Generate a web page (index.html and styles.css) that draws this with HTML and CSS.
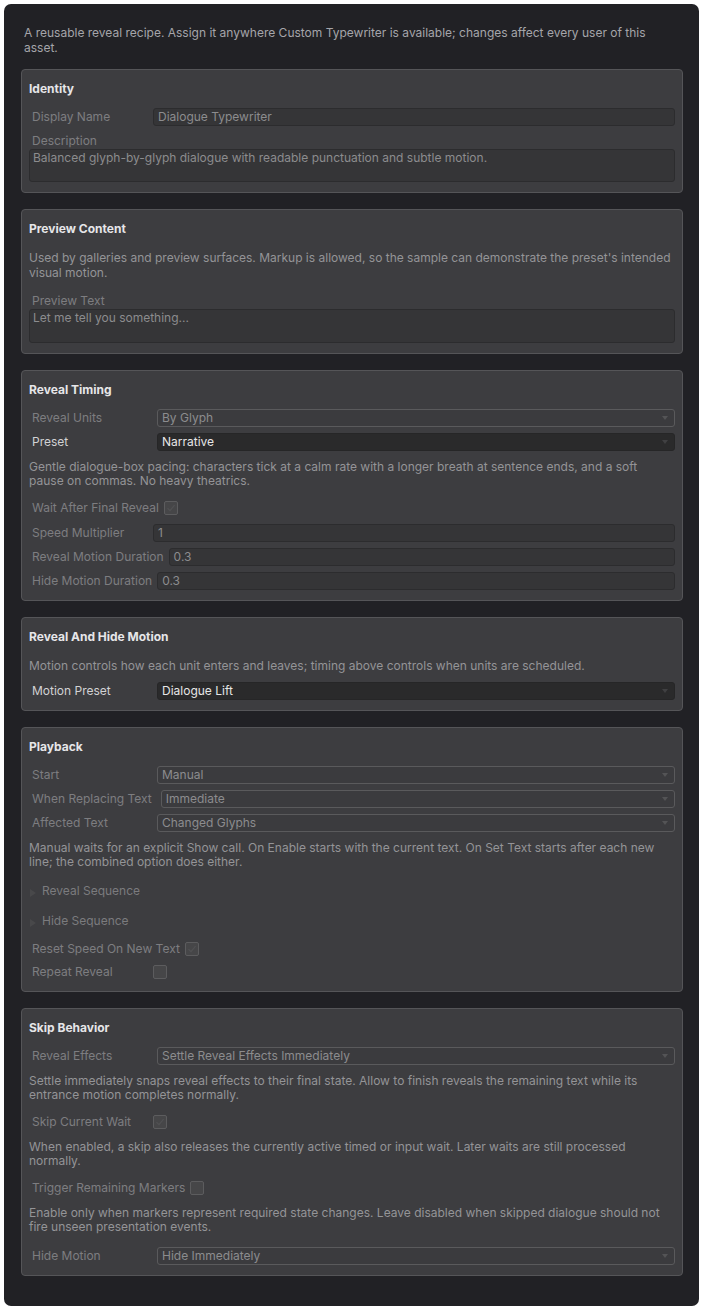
FILE: index.html
```html
<!DOCTYPE html>
<html lang="en">
<head>
<meta charset="utf-8">
<title>Typewriter Preset</title>
<link rel="stylesheet" href="styles.css">
</head>
<body>
<div class="inspector">
  <p class="intro">A reusable reveal recipe. Assign it anywhere Custom Typewriter is available; changes affect every user of this<br>asset.</p>

  <section class="group">
    <h2 class="group-title">Identity</h2>
    <div class="row"><span class="label">Display Name</span><div class="textfield">Dialogue Typewriter</div></div>
    <div class="stack-label">Description</div>
    <div class="textarea">Balanced glyph-by-glyph dialogue with readable punctuation and subtle motion.</div>
  </section>

  <section class="group">
    <h2 class="group-title">Preview Content</h2>
    <p class="help">Used by galleries and preview surfaces. Markup is allowed, so the sample can demonstrate the preset's intended<br>visual motion.</p>
    <div class="stack-label">Preview Text</div>
    <div class="textarea">Let me tell you something...</div>
  </section>

  <section class="group">
    <h2 class="group-title">Reveal Timing</h2>
    <div class="row"><span class="label">Reveal Units</span><div class="dropdown">By Glyph<span class="arrow"></span></div></div>
    <div class="row"><span class="label on">Preset</span><div class="dropdown on">Narrative<span class="arrow"></span></div></div>
    <p class="help">Gentle dialogue-box pacing: characters tick at a calm rate with a longer breath at sentence ends, and a soft<br>pause on commas. No heavy theatrics.</p>
    <div class="row check-row"><span class="label">Wait After Final Reveal</span><span class="checkbox"><svg viewBox="0 0 14 14" width="14" height="14"><path d="M3.5 7.2 L6 9.6 L10.6 4.2" fill="none" stroke="#515153" stroke-width="1.2"/></svg></span></div>
    <div class="row"><span class="label">Speed Multiplier</span><div class="textfield">1</div></div>
    <div class="row"><span class="label">Reveal Motion Duration</span><div class="textfield">0.3</div></div>
    <div class="row"><span class="label">Hide Motion Duration</span><div class="textfield">0.3</div></div>
  </section>

  <section class="group">
    <h2 class="group-title">Reveal And Hide Motion</h2>
    <p class="help">Motion controls how each unit enters and leaves; timing above controls when units are scheduled.</p>
    <div class="row tight"><span class="label on">Motion Preset</span><div class="dropdown on">Dialogue Lift<span class="arrow"></span></div></div>
  </section>

  <section class="group">
    <h2 class="group-title">Playback</h2>
    <div class="row"><span class="label">Start</span><div class="dropdown">Manual<span class="arrow"></span></div></div>
    <div class="row"><span class="label">When Replacing Text</span><div class="dropdown">Immediate<span class="arrow"></span></div></div>
    <div class="row"><span class="label">Affected Text</span><div class="dropdown">Changed Glyphs<span class="arrow"></span></div></div>
    <p class="help">Manual waits for an explicit Show call. On Enable starts with the current text. On Set Text starts after each new<br>line; the combined option does either.</p>
    <div class="foldout"><svg class="fold-tri" viewBox="0 0 8 10" width="8" height="10"><path d="M1 1 L7 5 L1 9 Z" fill="#48484a"/></svg><span>Reveal Sequence</span></div>
    <div class="foldout"><svg class="fold-tri" viewBox="0 0 8 10" width="8" height="10"><path d="M1 1 L7 5 L1 9 Z" fill="#48484a"/></svg><span>Hide Sequence</span></div>
    <div class="row check-row"><span class="label">Reset Speed On New Text</span><span class="checkbox"><svg viewBox="0 0 14 14" width="14" height="14"><path d="M3.5 7.2 L6 9.6 L10.6 4.2" fill="none" stroke="#515153" stroke-width="1.2"/></svg></span></div>
    <div class="row check-row"><span class="label">Repeat Reveal</span><span class="checkbox"></span></div>
  </section>

  <section class="group">
    <h2 class="group-title">Skip Behavior</h2>
    <div class="row"><span class="label">Reveal Effects</span><div class="dropdown">Settle Reveal Effects Immediately<span class="arrow"></span></div></div>
    <p class="help">Settle immediately snaps reveal effects to their final state. Allow to finish reveals the remaining text while its<br>entrance motion completes normally.</p>
    <div class="row check-row"><span class="label">Skip Current Wait</span><span class="checkbox"><svg viewBox="0 0 14 14" width="14" height="14"><path d="M3.5 7.2 L6 9.6 L10.6 4.2" fill="none" stroke="#515153" stroke-width="1.2"/></svg></span></div>
    <p class="help">When enabled, a skip also releases the currently active timed or input wait. Later waits are still processed<br>normally.</p>
    <div class="row check-row"><span class="label">Trigger Remaining Markers</span><span class="checkbox"></span></div>
    <p class="help">Enable only when markers represent required state changes. Leave disabled when skipped dialogue should not<br>fire unseen presentation events.</p>
    <div class="row loose"><span class="label">Hide Motion</span><div class="dropdown">Hide Immediately<span class="arrow"></span></div></div>
  </section>
</div>
</body>
</html>
```

FILE: styles.css
```css
* { box-sizing: border-box; }

html, body {
  margin: 0;
  padding: 0;
  background: #ffffff;
}

body {
  font-family: Inter, "Noto Sans", "Liberation Sans", sans-serif;
  font-size: 12px;
}

.inspector {
  margin: 4px 5px 5px 4px;
  padding: 22px 16px 29px 17px;
  background: #212125;
  border-radius: 7px;
  min-height: 1302px;
}

.intro {
  margin: 0 0 14px 0;
  padding: 0 20px 0 3px;
  line-height: 14.5px;
  color: #a5a5aa;
}

.group {
  display: flex;
  flex-direction: column;
  background: #3d3d40;
  border: 1px solid #555558;
  border-radius: 4px;
  padding: 11px 7px 7px 7px;
  margin-bottom: 16px;
}

.group:last-child { margin-bottom: 0; }

.group-title {
  margin: 0 0 8px 0;
  font-size: 12px;
  font-weight: 700;
  line-height: 16px;
  color: #e6e6e8;
}

.row {
  display: flex;
  align-items: center;
  height: 18px;
  margin: 3px 0;
}

.row.tight { margin-top: 0; }
.row.loose { margin-top: 4px; }

.check-row { margin: 2px 0 3px; }
.check-row + .row { margin-top: 4.5px; }
.check-row + .check-row { margin-top: 2px; }

.label {
  flex: none;
  min-width: 119px;
  padding-left: 3px;
  margin-right: 5px;
  color: #7d7d80;
  white-space: nowrap;
  line-height: 16px;
}

.label.on { color: #d2d2d4; }

.textfield {
  flex: 1;
  height: 18px;
  line-height: 16px;
  padding: 0 4px;
  background: #353537;
  border: 1px solid #2c2c2e;
  border-radius: 3px;
  color: #8c8c8e;
  white-space: nowrap;
  overflow: hidden;
}

.dropdown {
  position: relative;
  flex: 1;
  height: 18px;
  line-height: 16px;
  margin-left: 4px;
  padding: 0 4px;
  background: #3b3b3e;
  border: 1px solid #5a5a5c;
  border-radius: 3px;
  color: #8c8c8e;
  white-space: nowrap;
}

.dropdown.on {
  background: #2a2a2b;
  border-color: #262627;
  color: #e6e6e6;
}

.arrow {
  position: absolute;
  right: 6px;
  top: 6px;
  width: 0;
  height: 0;
  border-left: 3.5px solid transparent;
  border-right: 3.5px solid transparent;
  border-top: 4px solid #545456;
}

.dropdown.on .arrow { border-top-color: #404042; }

.checkbox {
  flex: none;
  display: block;
  width: 14px;
  height: 14px;
  background: #464648;
  border: 1px solid #5c5c5e;
  border-radius: 2px;
  position: relative;
}

.checkbox svg {
  position: absolute;
  left: -1px;
  top: -1px;
}

.help {
  margin: 6px 0 8px 0;
  line-height: 14.5px;
  color: #949497;
}

.stack-label {
  margin-top: 4px;
  padding-left: 3px;
  line-height: 16px;
  color: #7d7d80;
}

.help + .stack-label { margin-top: 5px; }

.textarea {
  height: 33px;
  margin-bottom: 3px;
  padding: 1px 3px;
  line-height: 14.5px;
  background: #353537;
  border: 1px solid #2c2c2e;
  border-radius: 3px;
  color: #8c8c8e;
}

.help + .stack-label + .textarea { height: 33.5px; }

.foldout {
  display: flex;
  align-items: center;
  height: 26px;
  margin-bottom: 4px;
  color: #7b7b7e;
}

.fold-tri {
  flex: none;
  margin: 5px 5px 0 0;
}
```
